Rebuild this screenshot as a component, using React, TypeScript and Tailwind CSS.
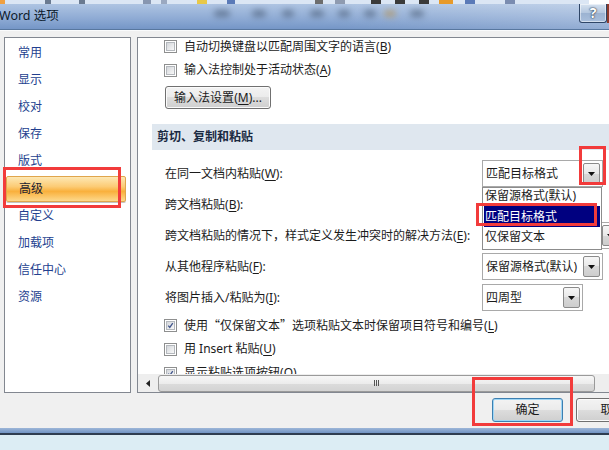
import React from "react";

const NAV = ["常用", "显示", "校对", "保存", "版式", "高级", "自定义", "加载项", "信任中心", "资源"];

// access key letter, underlined like the Win32 dialogs do
const K = ({ k }: { k: string }) => (
  <>
    (<span className="underline decoration-1 underline-offset-[2px]">{k}</span>)
  </>
);

// full-width CJK quote marks
const Q = ({ children }: { children: React.ReactNode }) => (
  <span className="font-['Noto_Sans_CJK_SC',sans-serif]">{children}</span>
);

function Checkbox({ checked }: { checked?: boolean }) {
  return (
    <span className="flex h-[13px] w-[13px] shrink-0 border border-[#8e8f8f] bg-white p-[1px]">
      <span className="relative h-full w-full border border-[#b4b8bd] bg-[image:linear-gradient(135deg,#d4d7db,#f8f8f8)]">
        {checked && (
          <svg viewBox="0 0 9 9" className="absolute inset-0 h-full w-full">
            <path d="M1.6 4.6 L3.6 7 L7.4 1.6" fill="none" stroke="#42568c" strokeWidth="1.7" />
          </svg>
        )}
      </span>
    </span>
  );
}

function CheckRow({ checked, children, className }: { checked?: boolean; children: React.ReactNode; className: string }) {
  return (
    <div className={"flex shrink-0 items-center gap-[7px] pl-[26px] " + className}>
      <Checkbox checked={checked} />
      <span className="whitespace-nowrap">{children}</span>
    </div>
  );
}

function DropArrow() {
  return (
    <span className="flex h-full w-[17px] shrink-0 items-center justify-center rounded-[2px] border border-[#8a8a8a] bg-[image:linear-gradient(#f6f6f6,#e8e8e8_50%,#d8d8d8_50%,#cdcdcd)]">
      <svg width="7" height="4" viewBox="0 0 7 4">
        <path d="M0 0 H7 L3.5 4 Z" fill="#111" />
      </svg>
    </span>
  );
}

function Combo({ value, className }: { value?: string; className: string }) {
  return (
    <div className={"flex h-[27px] shrink-0 items-center border border-[#a9a9a9] bg-white p-[2px] " + className}>
      <span className="flex-1 whitespace-nowrap pl-[1px]">{value}</span>
      <DropArrow />
    </div>
  );
}

function WinButton({ children, focused, className }: { children: React.ReactNode; focused?: boolean; className: string }) {
  return (
    <div
      className={
        "flex shrink-0 items-center justify-center rounded-[3px] border bg-[image:linear-gradient(#f3f3f3,#ebebeb_50%,#dddddd_50%,#cfcfcf)] " +
        (focused
          ? "border-[#3c7fb1] shadow-[inset_0_0_0_1px_#9fd6f5] "
          : "border-[#707070] shadow-[inset_0_0_0_1px_#fbfbfb] ") +
        className
      }
    >
      {children}
    </div>
  );
}

function FieldRow({ label, children }: { label: React.ReactNode; children?: React.ReactNode }) {
  return (
    <div className="flex h-[31px] shrink-0 items-center">
      <span className="w-[344px] shrink-0 whitespace-nowrap pl-[27px]">{label}</span>
      {children}
    </div>
  );
}

function TitleBar() {
  const blobs = [
    "left-[214px] w-[16px]",
    "left-[252px] w-[14px]",
    "left-[282px] w-[12px]",
    "left-[310px] w-[14px]",
    "left-[338px] w-[12px]",
    "left-[364px] w-[12px]",
    "left-[410px] w-[14px]",
  ];
  return (
    <div className="relative flex h-[26px] shrink-0 items-center border-b border-[#58779f] bg-[image:linear-gradient(90deg,transparent_55%,rgba(255,255,255,0.22)),linear-gradient(180deg,#aec4e2,#90acd5_55%,#7596c7)]">
      {blobs.map((b) => (
        <span key={b} className={"absolute top-[6px] h-[7px] rounded-full bg-[#34465e] opacity-50 blur-[3px] " + b} />
      ))}
      <span className="absolute left-[384px] top-[6px] h-[7px] w-[12px] rounded-full bg-[#b8904a] opacity-60 blur-[3px]" />
      <span className="relative -ml-[1px] text-[12.5px] text-[#0c1a2c]">Word 选项</span>
      <div className="relative ml-auto flex h-full items-start">
        <div className="flex h-[19px] w-[28px] items-center justify-center rounded-b-[3px] border border-t-0 border-[#2f4667] bg-[image:linear-gradient(#d6e2f0,#b3c6de_50%,#9bb2d1_50%,#a9bfdc)] shadow-[inset_0_0_0_1px_rgba(255,255,255,0.5)]">
          <span className="text-[14px] font-bold text-white [text-shadow:0_0_2px_#1b2a40,0_0_1px_#1b2a40]">?</span>
        </div>
        <div className="h-[19px] w-[2px] bg-[#8e3b2c]" />
      </div>
    </div>
  );
}

function ToolbarStrip() {
  const bits = [
    "w-[5px] bg-[#f0a040]", "w-[40px]", "w-[6px] bg-[#6a7a90]", "w-[28px]", "w-[6px] bg-[#6a7a90]",
    "w-[58px]", "w-[8px] bg-[#8796b0]", "w-[10px]", "w-[6px] bg-[#9aa8c0]", "w-[30px]",
    "w-[10px] bg-[#e8c848]", "w-[20px]", "w-[8px] bg-[#5a7ab8]", "w-[80px]", "w-[8px] bg-[#6d6d6d]",
    "w-[12px]", "w-[10px] bg-[#8f9bb0]", "w-[26px]", "w-[10px] bg-[#3a3a3a]", "w-[14px]",
    "w-[10px] bg-[#3a3a3a]", "w-[14px]", "w-[10px] bg-[#3a3a3a]", "w-[10px]", "w-[14px] bg-[#e79a2a]",
    "w-[12px]", "w-[10px] bg-[#5a7ab8]", "w-[30px]", "w-[10px] bg-[#7a8cb0]", "w-[74px]", "w-[52px] bg-white",
  ];
  return (
    <div className="flex h-[4px] shrink-0 items-stretch bg-[#dbe6f4]">
      {bits.map((b, i) => (
        <span key={i} className={"shrink-0 " + b} />
      ))}
    </div>
  );
}

function HScrollbar() {
  return (
    <div className="flex h-[18px] shrink-0 items-center bg-[#eeeeee]">
      <span className="flex w-[20px] shrink-0 items-center justify-center">
        <svg width="4" height="7" viewBox="0 0 4 7">
          <path d="M4 0 V7 L0 3.5 Z" fill="#222" />
        </svg>
      </span>
      <div className="flex h-[17px] w-[437px] shrink-0 items-center justify-center rounded-[3px] border border-[#9a9a9a] bg-[image:linear-gradient(#f7f7f7,#ececec_50%,#dcdcdc_50%,#d3d3d3)]">
        <span className="flex gap-[1px]">
          <span className="h-[6px] w-[1px] bg-[#555]" />
          <span className="h-[6px] w-[1px] bg-[#555]" />
          <span className="h-[6px] w-[1px] bg-[#555]" />
        </span>
      </div>
    </div>
  );
}

export default function App() {
  return (
    <div className="relative flex h-[450px] w-[609px] flex-col overflow-hidden bg-[#dcedf4] font-['Noto_Sans','Noto_Sans_CJK_SC',sans-serif] text-[12px] leading-none text-[#1b1b1b]">
      <ToolbarStrip />
      <TitleBar />

      <div className="flex h-[398px] shrink-0 flex-col border-t border-[#fafbfc] bg-[#f0f0f0] pt-[6px]">
        <div className="flex h-[356px] shrink-0 gap-[6px] pl-[4px]">
          {/* category list */}
          <div className="flex w-[127px] shrink-0 flex-col border border-[#828790] bg-white pt-[1px]">
            {NAV.map((n) =>
              n === "高级" ? (
                <div key={n} className="flex h-[27.2px] shrink-0 items-center pl-[1px] pr-[4px]">
                  <div className="flex h-[26px] w-full items-center rounded-[2px] border border-[#e0a54c] bg-[image:linear-gradient(#fde8b4,#fccb75_40%,#f9b03c_60%,#fdd98c)] pl-[12px] text-[#1c1c30] shadow-[0_1px_0_#c4c4c4]">
                    {n}
                  </div>
                </div>
              ) : (
                <div key={n} className="flex h-[27.2px] shrink-0 items-center pl-[13px] text-[#233f8f]">
                  {n}
                </div>
              )
            )}
          </div>

          {/* settings page */}
          <div className="flex w-[490px] shrink-0 flex-col border border-[#828790] bg-white">
            <div className="flex h-[336px] shrink-0 flex-col overflow-hidden">
              <CheckRow className="h-[17px]">
                自动切换键盘以匹配周围文字的语言<K k="B" />
              </CheckRow>
              <CheckRow className="mt-[3px] h-[24px]">
                输入法控制处于活动状态<K k="A" />
              </CheckRow>
              <div className="mt-[4px] flex pl-[27px]">
                <WinButton className="h-[23px] w-[106px]">
                  输入法设置<K k="M" />...
                </WinButton>
              </div>

              <div className="ml-[14px] mt-[15px] flex h-[26px] shrink-0 items-center bg-[#dfe7ef] pl-[5px] font-bold text-[#1a2a42]">
                剪切、复制和粘贴
              </div>

              <div className="mt-[8px] flex shrink-0 flex-col">
                <FieldRow label={<>在同一文档内粘贴<K k="W" />:</>}>
                  <Combo value="匹配目标格式" className="w-[121px]" />
                </FieldRow>
                <FieldRow label={<>跨文档粘贴<K k="B" />:</>}>
                  <Combo className="w-[120px]" />
                </FieldRow>
                <FieldRow label={<>跨文档粘贴的情况下，样式定义发生冲突时的解决方法<K k="E" />:</>}>
                  <Combo className="w-[140px]" />
                </FieldRow>
                <FieldRow label={<>从其他程序粘贴<K k="F" />:</>}>
                  <Combo value="保留源格式(默认)" className="w-[121px]" />
                </FieldRow>
                <FieldRow label={<>将图片插入/粘贴为<K k="I" />:</>}>
                  <Combo value="四周型" className="w-[101px]" />
                </FieldRow>
              </div>

              <CheckRow checked className="h-[24px]">
                使用<Q>“</Q>仅保留文本<Q>”</Q>选项粘贴文本时保留项目符号和编号<K k="L" />
              </CheckRow>
              <CheckRow className="h-[24px]">
                用 Insert 粘贴<K k="U" />
              </CheckRow>
              <CheckRow checked className="h-[24px]">
                显示粘贴选项按钮<K k="O" />
              </CheckRow>
            </div>
            <HScrollbar />
          </div>
        </div>

        <div className="mt-[5px] flex h-[24px] shrink-0 gap-[13px] pl-[492px]">
          <WinButton focused className="h-[24px] w-[71px]">确定</WinButton>
          <WinButton className="h-[24px] w-[73px]">取消</WinButton>
        </div>
      </div>

      {/* window frame edge and the window behind */}
      <div className="h-[5px] shrink-0 bg-[image:linear-gradient(#9db6d8,#7093c3)]" />
      <div className="h-[2px] shrink-0 bg-[#2e3d50]" />

      {/* open drop-down list of the first combo */}
      <div className="absolute left-[482px] top-[187px] flex h-[63px] w-[120px] flex-col overflow-hidden border border-[#8c8c8c] bg-white">
        <div className="-mt-[2px] flex h-[20px] shrink-0 items-center pl-[2px]">保留源格式(默认)</div>
        <div className="mx-[1px] flex h-[21px] shrink-0 items-center bg-[#000080] pl-[1px] text-white">匹配目标格式</div>
        <div className="flex h-[20px] shrink-0 items-center pl-[2px]">仅保留文本</div>
      </div>

      {/* red markers */}
      <div className="absolute left-[3px] top-[167px] h-[41px] w-[118px] border-[3px] border-[#f23b3b]" />
      <div className="absolute left-[579px] top-[146px] h-[39px] w-[27px] border-[3px] border-[#f23b3b]" />
      <div className="absolute left-[476px] top-[203px] h-[23px] w-[121px] border-[3px] border-[#f23b3b]" />
      <div className="absolute left-[472px] top-[377px] h-[49px] w-[101px] border-[3px] border-[#f23b3b]" />
    </div>
  );
}
